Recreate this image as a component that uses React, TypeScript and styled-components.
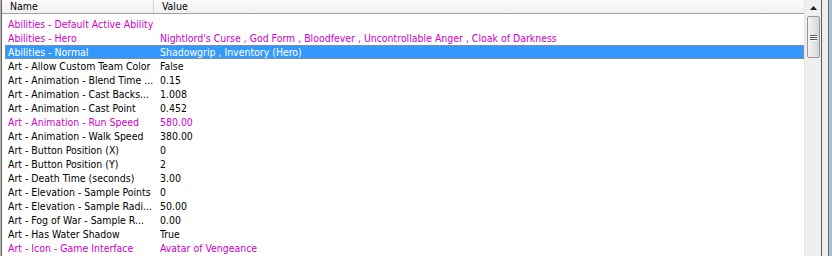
import styled, { createGlobalStyle } from 'styled-components';

const GlobalStyle = createGlobalStyle`
  html, body {
    margin: 0;
    padding: 0;
    background: #f0f0f0;
  }
  body {
    font-family: "DejaVu Sans Condensed", "DejaVu Sans", sans-serif;
    font-stretch: condensed;
    font-size: 10.45px;
    color: #000;
  }
`;

const Window = styled.div`
  display: flex;
  width: 832px;
  height: 256px;
  overflow: hidden;
  background: #f0f0f0;
`;

const OuterEdge = styled.div`
  display: flex;
  flex: 0 0 820px;
  border-left: 1px solid #b4b4b4;
`;

const ListView = styled.div`
  display: flex;
  flex: 1;
  min-width: 0;
  border-left: 1px solid #646464;
`;

const ListArea = styled.div`
  flex: 1;
  min-width: 0;
  display: flex;
  flex-direction: column;
  background: #fff;
`;

const Header = styled.div`
  display: flex;
  height: 13px;
  flex: 0 0 13px;
  background: linear-gradient(#fbfbfb, #f1f1f1);
  border-bottom: 1px solid #a0a0a0;
`;

const HeaderCell = styled.div<{ $width?: number }>`
  flex: ${(p) => (p.$width ? `0 0 ${p.$width}px` : '1')};
  box-sizing: border-box;
  padding-left: 8px;
  line-height: 12px;
  white-space: nowrap;
  overflow: hidden;
  border-right: ${(p) => (p.$width ? '1px solid #d5d5d5' : 'none')};
`;

const Rows = styled.div`
  display: flex;
  flex-direction: column;
  padding-top: 3px;
`;

const Row = styled.div<{ $selected?: boolean; $modified?: boolean }>`
  display: flex;
  height: 14px;
  margin-left: 3px;
  box-sizing: border-box;
  line-height: 12px;
  white-space: nowrap;
  color: ${(p) => (p.$selected ? '#fff' : p.$modified ? '#cc00cc' : '#000')};
  background: ${(p) => (p.$selected ? '#3399ff' : 'transparent')};
  border: 1px ${(p) => (p.$selected ? 'dotted #c4883a' : 'solid transparent')};
`;

const NameCell = styled.div`
  flex: 0 0 154px;
  box-sizing: border-box;
  padding-left: 2px;
  overflow: hidden;
`;

const ValueCell = styled.div`
  flex: 1;
  overflow: hidden;
`;

const ScrollBar = styled.div`
  flex: 0 0 16px;
  display: flex;
  flex-direction: column;
  align-items: center;
  background: #efefef;
  border-left: 1px solid #e4e4e4;
`;

const ArrowButton = styled.div`
  flex: 0 0 16px;
  width: 100%;
  display: flex;
  align-items: center;
  justify-content: center;
`;

const Thumb = styled.div`
  width: 13px;
  height: 42px;
  box-sizing: border-box;
  border: 1px solid #979797;
  border-radius: 2px;
  background: linear-gradient(90deg, #f4f4f4, #e6e6e6 50%, #d4d4d4);
  display: flex;
  flex-direction: column;
  align-items: center;
  justify-content: center;
  gap: 1px;
`;

const Grip = styled.div`
  width: 7px;
  height: 1px;
  background: #5c5c5c;
  box-shadow: 0 1px 0 #fff;
`;

const FrameLine = styled.div<{ $color: string; $width: number }>`
  flex: 0 0 ${(p) => p.$width}px;
  background: ${(p) => p.$color};
`;

interface Field {
  name: string;
  value: string;
  modified?: boolean;
  selected?: boolean;
}

const fields: Field[] = [
  { name: 'Abilities - Default Active Ability', value: '', modified: true },
  {
    name: 'Abilities - Hero',
    value: "Nightlord's Curse , God Form , Bloodfever , Uncontrollable Anger , Cloak of Darkness",
    modified: true,
  },
  { name: 'Abilities - Normal', value: 'Shadowgrip , Inventory (Hero)', selected: true },
  { name: 'Art - Allow Custom Team Color', value: 'False' },
  { name: 'Art - Animation - Blend Time ...', value: '0.15' },
  { name: 'Art - Animation - Cast Backs...', value: '1.008' },
  { name: 'Art - Animation - Cast Point', value: '0.452' },
  { name: 'Art - Animation - Run Speed', value: '580.00', modified: true },
  { name: 'Art - Animation - Walk Speed', value: '380.00' },
  { name: 'Art - Button Position (X)', value: '0' },
  { name: 'Art - Button Position (Y)', value: '2' },
  { name: 'Art - Death Time (seconds)', value: '3.00' },
  { name: 'Art - Elevation - Sample Points', value: '0' },
  { name: 'Art - Elevation - Sample Radi...', value: '50.00' },
  { name: 'Art - Fog of War - Sample R...', value: '0.00' },
  { name: 'Art - Has Water Shadow', value: 'True' },
  { name: 'Art - Icon - Game Interface', value: 'Avatar of Vengeance', modified: true },
];

export default function App() {
  return (
    <>
      <GlobalStyle />
      <Window>
        <OuterEdge>
          <ListView>
            <ListArea>
              <Header>
                <HeaderCell $width={152}>Name</HeaderCell>
                <HeaderCell>Value</HeaderCell>
              </Header>
              <Rows>
                {fields.map((f) => (
                  <Row key={f.name} $selected={f.selected} $modified={f.modified}>
                    <NameCell>{f.name}</NameCell>
                    <ValueCell>{f.value}</ValueCell>
                  </Row>
                ))}
              </Rows>
            </ListArea>
            <ScrollBar>
              <ArrowButton>
                <svg width="7" height="4" viewBox="0 0 7 4">
                  <path d="M0 4 L3.5 0 L7 4 Z" fill="#222" />
                </svg>
              </ArrowButton>
              <Thumb>
                <Grip />
                <Grip />
                <Grip />
              </Thumb>
            </ScrollBar>
          </ListView>
        </OuterEdge>
        <FrameLine $color="#5e5e5e" $width={1} />
        <FrameLine $color="#ededed" $width={6} />
        <FrameLine $color="#6a6a6a" $width={1} />
        <FrameLine $color="#a9bfd8" $width={4} />
      </Window>
    </>
  );
}
